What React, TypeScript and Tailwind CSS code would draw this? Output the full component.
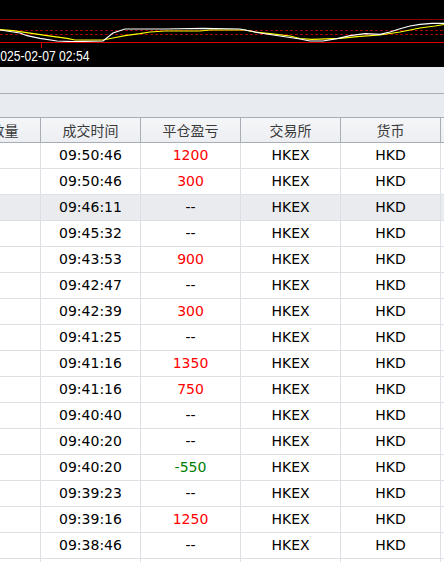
import React from "react";

const rows: [string, string, string][] = [
  ["09:50:46", "1200", "r"],
  ["09:50:46", "300", "r"],
  ["09:46:11", "--", ""],
  ["09:45:32", "--", ""],
  ["09:43:53", "900", "r"],
  ["09:42:47", "--", ""],
  ["09:42:39", "300", "r"],
  ["09:41:25", "--", ""],
  ["09:41:16", "1350", "r"],
  ["09:41:16", "750", "r"],
  ["09:40:40", "--", ""],
  ["09:40:20", "--", ""],
  ["09:40:20", "-550", "g"],
  ["09:39:23", "--", ""],
  ["09:39:16", "1250", "r"],
  ["09:38:46", "--", ""],
  ["09:38:20", "--", ""],
];

const white =
  "0,30 20,33 27,35.7 40,38.3 57,41 73,41.7 103,41 113,33 125,29 150,29 165,29 203,28.3 240,29 250,31 260,33 280,36 300,39 310,41 323,41 337,38.7 350,35.7 365,33.7 380,34.3 390,32 400,28.7 410,26 420,24.3 432,23.3 444,23.3";
const yellow =
  "0,29.7 13,30.7 47,35.7 67,38.3 75,40 103,40 113,38 125,35.7 140,33.7 150,32 165,31 200,31 210,30 245,30 255,32 270,33.7 290,36 300,38.5 312,39.3 340,38.3 360,36.3 380,35 400,32 420,28 435,26 444,24.5";

const Chart = () => (
  <div className="h-[67px] bg-black overflow-hidden">
    <svg width="444" height="67" viewBox="0 0 444 67">
      <line x1="0" y1="19.5" x2="444" y2="19.5" stroke="#8b0000" strokeWidth="1" />
      <line x1="0" y1="30.5" x2="444" y2="30.5" stroke="#a00000" strokeWidth="1" strokeDasharray="3 2" />
      <line x1="0" y1="34.5" x2="444" y2="34.5" stroke="#a00000" strokeWidth="1" strokeDasharray="3 2" />
      <polyline points={yellow} fill="none" stroke="#ffff00" strokeWidth="1.2" />
      <polyline points={white} fill="none" stroke="#ffffff" strokeWidth="1.2" />
      <line x1="0" y1="42.5" x2="444" y2="42.5" stroke="#e00000" strokeWidth="1" />
      <line x1="41.5" y1="42" x2="41.5" y2="48" stroke="#e00000" strokeWidth="1" />
      <text
        x="-6.5"
        y="61"
        fill="#ffffff"
        fontSize="14"
        textLength="96"
        lengthAdjust="spacingAndGlyphs"
        fontFamily="'Liberation Sans', Arial, sans-serif"
      >
        2025-02-07 02:54
      </text>
    </svg>
  </div>
);

const headers = ["成交数量", "成交时间", "平仓盈亏", "交易所", "货币", "备注"];

export default function App() {
  return (
    <div className="w-[444px] h-[562px] overflow-hidden bg-white">
      <Chart />
      <div className="h-[27px] bg-[#e8ebef] border-b border-[#a8aeb6]" />
      <div className="h-[23px] bg-[#e8ebef]" />
      <div
        className="flex h-[26px] ml-[-59px] border-y border-y-[#a8aeb6] bg-gradient-to-b from-[#f5f6f8] to-[#eceef2] text-[14px] text-[#3a3a3a]"
        style={{ fontFamily: "'Noto Sans CJK SC', 'Noto Sans', sans-serif" }}
      >
        {headers.map((h, i) => (
          <div
            key={i}
            className="w-[100px] shrink-0 border-r border-[#a8aeb6] flex items-center justify-center leading-none"
          >
            {h}
          </div>
        ))}
      </div>
      <div
        className="text-[14px] text-black"
        style={{ fontFamily: "'DejaVu Sans', Verdana, sans-serif" }}
      >
        {rows.map(([t, p, c], i) => (
          <div
            key={i}
            className={`flex h-[26px] ml-[-59px] border-b border-[#dcdfe3] ${
              i === 2 ? "bg-[#e9ebee]" : "bg-white"
            }`}
          >
            <div className="w-[100px] shrink-0 border-r border-[#dcdfe3]" />
            <div className="w-[100px] shrink-0 border-r border-[#dcdfe3] flex items-center justify-center">
              {t}
            </div>
            <div
              className={`w-[100px] shrink-0 border-r border-[#dcdfe3] flex items-center justify-center ${
                c === "r" ? "text-[#ff0000]" : c === "g" ? "text-[#008000]" : "text-black"
              }`}
            >
              {p}
            </div>
            <div className="w-[100px] shrink-0 border-r border-[#dcdfe3] flex items-center justify-center">
              HKEX
            </div>
            <div className="w-[100px] shrink-0 border-r border-[#dcdfe3] flex items-center justify-center">
              HKD
            </div>
            <div className="w-[100px] shrink-0" />
          </div>
        ))}
      </div>
    </div>
  );
}
